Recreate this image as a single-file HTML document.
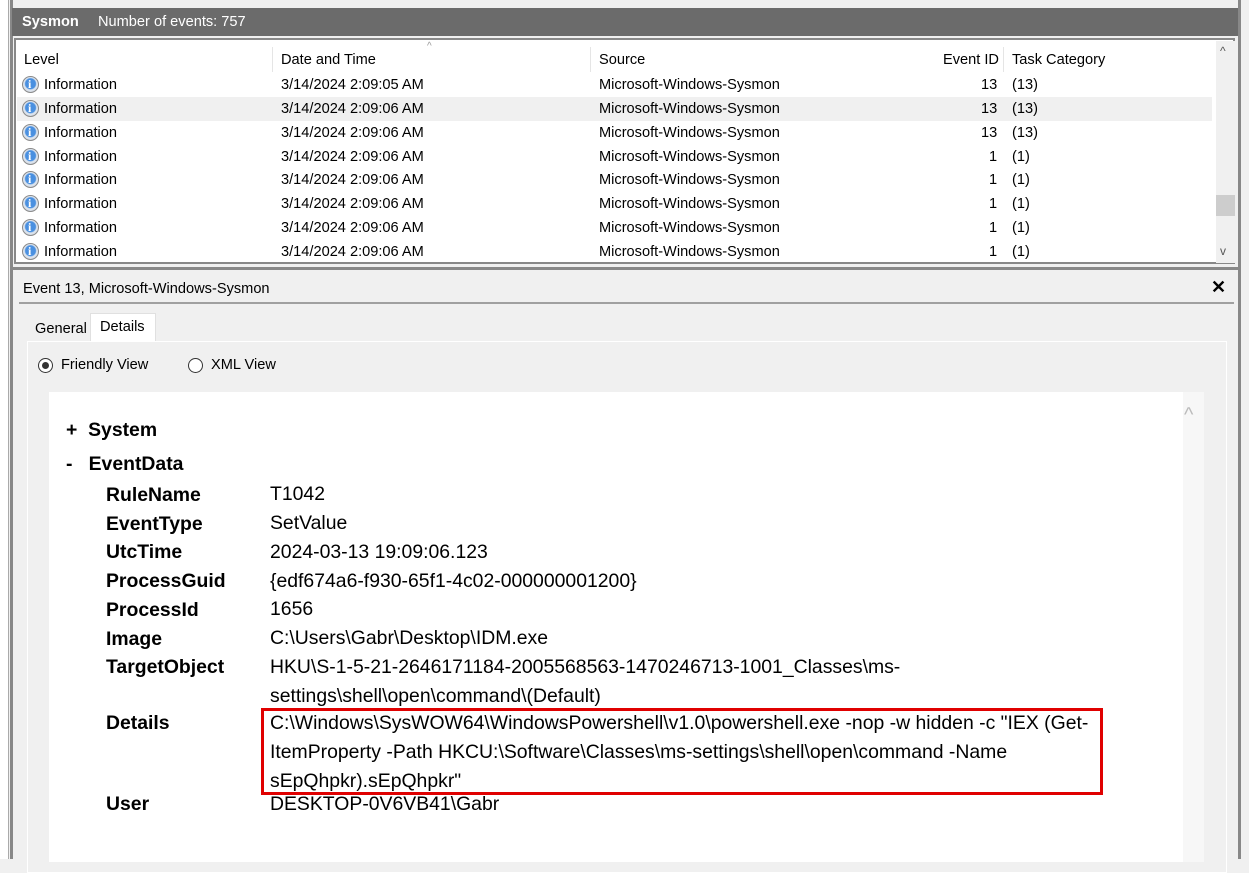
<!DOCTYPE html>
<html><head><style>
body{margin:0;width:1249px;height:859px;background:#f0f0f0;font-family:"Liberation Sans",sans-serif;position:relative;overflow:hidden}
.a{position:absolute}
.row{position:absolute;left:17px;width:1195px;height:24px;font-size:14.6px;color:#000}
.row span{position:absolute;top:4px}
.ic{position:absolute;left:5px;top:3px;width:17px;height:17px;border-radius:50%;background:radial-gradient(circle at 50% 45%,#4a90e0 45%,#dfe6ef 55%,#c7ced8);border:1px solid #8a8a8a;box-sizing:border-box}
.ic:after{content:"i";position:absolute;left:5px;top:0px;color:#fff;font:bold 12px "Liberation Serif",serif}
.lb{position:absolute;left:106px;font-weight:bold;font-size:19.4px}
.vl{position:absolute;left:270px;font-size:19.4px;line-height:29px}
</style></head><body>
<div class="a" style="left:0;top:0;width:8px;height:859px;background:#fff;border-right:1px solid #aaa"></div>
<div class="a" style="left:10px;top:0;width:3px;height:859px;background:#888"></div>
<div class="a" style="left:1238px;top:0;width:3px;height:859px;background:#888"></div>
<div class="a" style="left:12px;top:8px;width:1226px;height:28px;background:#6b6b6b;color:#fff;font-size:14.6px">
<b style="position:absolute;left:10px;top:6px">Sysmon</b><span style="position:absolute;left:86px;top:6px">Number of events: 757</span></div>
<div class="a" style="left:14px;top:38px;width:1221px;height:226px;background:#fff;border:2px solid #888;box-sizing:border-box"></div>
<div class="a" style="left:1216px;top:41px;width:19px;height:222px;background:#f0f0f0"></div>
<div class="a" style="left:1216px;top:195px;width:19px;height:21px;background:#cdcdcd"></div>
<div class="a" style="left:1220px;top:44px;font-size:12px;color:#555">^</div>
<div class="a" style="left:1220px;top:244px;font-size:12px;color:#555">v</div>
<div class="a" style="left:17px;top:47px;width:1195px;height:25px;font-size:14.6px">
<span class="a" style="left:7px;top:5px">Level</span>
<span class="a" style="left:264px;top:5px">Date and Time</span>
<span class="a" style="left:582px;top:5px">Source</span>
<span class="a" style="left:926px;top:5px">Event ID</span>
<span class="a" style="left:995px;top:5px">Task Category</span>
<div class="a" style="left:255px;top:0;width:1px;height:25px;background:#e5e5e5"></div>
<div class="a" style="left:573px;top:0;width:1px;height:25px;background:#e5e5e5"></div>
<div class="a" style="left:986px;top:0;width:1px;height:25px;background:#e5e5e5"></div>
<div class="a" style="left:410px;top:-6px;font-size:10px;color:#999">^</div>
</div>
<div class="row" style="top:73px"><div class="ic"></div><span style="left:27px">Information</span><span style="left:264px">3/14/2024 2:09:05 AM</span><span style="left:582px">Microsoft-Windows-Sysmon</span><span style="left:964px">13</span><span style="left:995px">(13)</span></div>
<div class="row" style="top:97px;background:#f0f0f0"><div class="ic"></div><span style="left:27px">Information</span><span style="left:264px">3/14/2024 2:09:06 AM</span><span style="left:582px">Microsoft-Windows-Sysmon</span><span style="left:964px">13</span><span style="left:995px">(13)</span></div>
<div class="row" style="top:121px"><div class="ic"></div><span style="left:27px">Information</span><span style="left:264px">3/14/2024 2:09:06 AM</span><span style="left:582px">Microsoft-Windows-Sysmon</span><span style="left:964px">13</span><span style="left:995px">(13)</span></div>
<div class="row" style="top:145px"><div class="ic"></div><span style="left:27px">Information</span><span style="left:264px">3/14/2024 2:09:06 AM</span><span style="left:582px">Microsoft-Windows-Sysmon</span><span style="left:972px">1</span><span style="left:995px">(1)</span></div>
<div class="row" style="top:168px"><div class="ic"></div><span style="left:27px">Information</span><span style="left:264px">3/14/2024 2:09:06 AM</span><span style="left:582px">Microsoft-Windows-Sysmon</span><span style="left:972px">1</span><span style="left:995px">(1)</span></div>
<div class="row" style="top:192px"><div class="ic"></div><span style="left:27px">Information</span><span style="left:264px">3/14/2024 2:09:06 AM</span><span style="left:582px">Microsoft-Windows-Sysmon</span><span style="left:972px">1</span><span style="left:995px">(1)</span></div>
<div class="row" style="top:216px"><div class="ic"></div><span style="left:27px">Information</span><span style="left:264px">3/14/2024 2:09:06 AM</span><span style="left:582px">Microsoft-Windows-Sysmon</span><span style="left:972px">1</span><span style="left:995px">(1)</span></div>
<div class="row" style="top:240px"><div class="ic"></div><span style="left:27px">Information</span><span style="left:264px">3/14/2024 2:09:06 AM</span><span style="left:582px">Microsoft-Windows-Sysmon</span><span style="left:972px">1</span><span style="left:995px">(1)</span></div>
<div class="a" style="left:12px;top:267px;width:1226px;height:3px;background:#888"></div>
<div class="a" style="left:23px;top:281px;font-size:14.6px">Event 13, Microsoft-Windows-Sysmon</div>
<div class="a" style="left:1211px;top:277px;font-size:18px;font-weight:bold">✕</div>
<div class="a" style="left:19px;top:302px;width:1215px;height:2px;background:#a0a0a0"></div>
<div class="a" style="left:35px;top:321px;font-size:14.6px">General</div>
<div class="a" style="left:90px;top:313px;width:64px;height:29px;background:#fff;border:1px solid #e0e0e0;border-bottom:none"></div>
<div class="a" style="left:100px;top:319px;font-size:14.6px">Details</div>
<div class="a" style="left:27px;top:341px;width:1198px;height:530px;background:#f0f0f0;border:1px solid #fff"></div>
<div class="a" style="left:38px;top:358px;width:15px;height:15px;border:1px solid #333;border-radius:50%;box-sizing:border-box;background:#fff"><div class="a" style="left:3px;top:3px;width:7px;height:7px;border-radius:50%;background:#333"></div></div>
<div class="a" style="left:61px;top:357px;font-size:14.6px">Friendly View</div>
<div class="a" style="left:188px;top:358px;width:15px;height:15px;border:1px solid #333;border-radius:50%;box-sizing:border-box;background:#fff"></div>
<div class="a" style="left:211px;top:357px;font-size:14.6px">XML View</div>
<div class="a" style="left:49px;top:392px;width:1134px;height:470px;background:#fff"></div>
<div class="a" style="left:1183px;top:392px;width:21px;height:470px;background:#f7f7f7"></div>
<div class="a" style="left:1184px;top:404px;font-size:20px;color:#bbb">^</div>
<div class="a" style="left:66px;top:419px;font-size:19.4px;font-weight:bold">+&nbsp; System</div>
<div class="a" style="left:66px;top:453px;font-size:19.4px;font-weight:bold">-&nbsp;&nbsp; EventData</div>
<div class="lb" style="top:484px">RuleName</div><div class="vl" style="top:480px">T1042</div>
<div class="lb" style="top:513px">EventType</div><div class="vl" style="top:509px">SetValue</div>
<div class="lb" style="top:541px">UtcTime</div><div class="vl" style="top:538px">2024-03-13 19:09:06.123</div>
<div class="lb" style="top:570px">ProcessGuid</div><div class="vl" style="top:567px">{edf674a6-f930-65f1-4c02-000000001200}</div>
<div class="lb" style="top:599px">ProcessId</div><div class="vl" style="top:595px">1656</div>
<div class="lb" style="top:628px">Image</div><div class="vl" style="top:624px">C:\Users\Gabr\Desktop\IDM.exe</div>
<div class="lb" style="top:656px">TargetObject</div><div class="vl" style="top:653px">HKU\S-1-5-21-2646171184-2005568563-1470246713-1001_Classes\ms-<br>settings\shell\open\command\(Default)</div>
<div class="lb" style="top:712px">Details</div><div class="vl" style="top:709px;white-space:nowrap">C:\Windows\SysWOW64\WindowsPowershell\v1.0\powershell.exe -nop -w hidden -c "IEX (Get-<br>ItemProperty -Path HKCU:\Software\Classes\ms-settings\shell\open\command -Name<br>sEpQhpkr).sEpQhpkr"</div>
<div class="a" style="left:261px;top:708px;width:842px;height:87px;border:3px solid #e00000;box-sizing:border-box"></div>
<div class="lb" style="top:793px">User</div><div class="vl" style="top:790px">DESKTOP-0V6VB41\Gabr</div>
</body></html>
